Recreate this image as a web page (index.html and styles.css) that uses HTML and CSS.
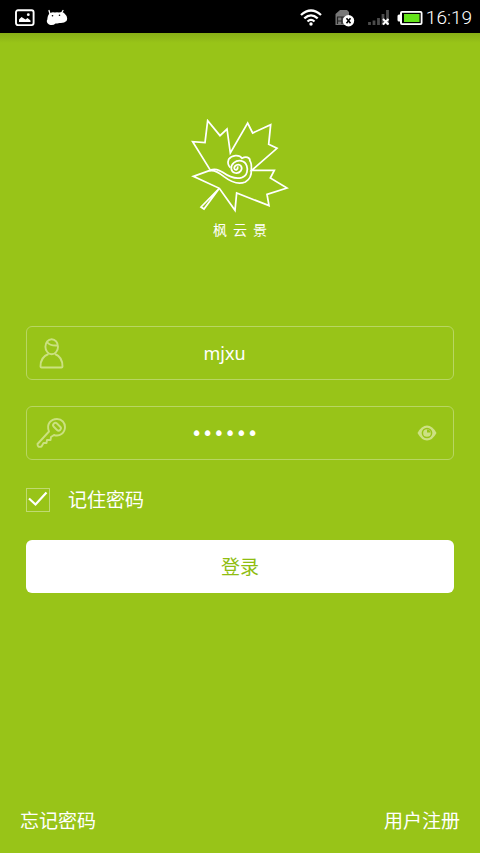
FILE: index.html
```html
<!DOCTYPE html>
<html lang="zh-CN">
<head>
<meta charset="utf-8">
<meta name="viewport" content="width=device-width, initial-scale=1">
<title>枫云景</title>
<link rel="stylesheet" href="styles.css">
</head>
<body>
<header class="status-bar">
  <div class="status-group notices">
    <svg width="20" height="18" viewBox="0 0 20 18" aria-hidden="true">
      <rect x="1" y="1.300" width="17.600" height="14.800" rx="2" fill="none" stroke="#fff" stroke-width="1.900"/>
      <path d="M4 13V10.500L6.500 8L10.500 10.500L12.500 9L15.500 11.500V13Z" fill="#fff"/>
      <circle cx="13.300" cy="5.700" r="1.400" fill="#fff"/>
    </svg>
    <svg width="22" height="18" viewBox="0 0 22 18" aria-hidden="true">
      <path d="M4 5L3 1.500M15.500 4L17 1.500" stroke="#fff" stroke-width="1.300" stroke-linecap="round"/>
      <path d="M3 5Q5 2.500 9 3.500Q11 3 13 3.500Q17 2 18.500 4.500Q22.500 8 20.500 12Q18 14.500 13.500 14Q11 14.500 9.500 14.500Q7 17 3 15.500Q-0.500 13.500 1.500 10Q1 8 3 5Z" fill="#fff"/>
      <circle cx="6.500" cy="6.800" r="0.800"/><circle cx="13.500" cy="6.300" r="0.800"/>
    </svg>
  </div>
  <div class="status-group system">
    <svg class="wifi" width="22" height="17" viewBox="0 0 22 17" aria-hidden="true">
      <g fill="none" stroke="#fff" stroke-width="2.300">
        <path d="M1 6Q11 -3 21 6M4.300 9.400Q11 3.300 17.700 9.400M7.500 12.500Q11 9.300 14.500 12.500"/>
      </g>
      <circle cx="11" cy="15" r="1.700" fill="#fff"/>
    </svg>
    <svg class="sim" width="20" height="18" viewBox="0 0 20 18" aria-hidden="true">
      <path d="M5 1H12L14 3V16H0.500V5Z" fill="#777"/>
      <path d="M2 8H12M3 12H12M2.500 8V15M7 8V15" stroke="#222" stroke-width="1.200"/>
      <circle cx="13.500" cy="11.700" r="5.700" fill="#fff"/>
      <path d="M11.500 9.200L15.500 14.200M15.500 9.200L11.500 14.200" stroke="#000" stroke-width="1.600"/>
    </svg>
    <svg class="signal" width="22" height="17" viewBox="0 0 22 17" aria-hidden="true">
      <path d="M1.500 13V16M6 11.500V16M10.500 9V16M15 5V16M19.500 1V16" stroke="#4c4c4c" stroke-width="2.800"/>
      <path d="M15 10L20.500 15.500M20.500 10L15 15.500" stroke="#fff" stroke-width="2"/>
    </svg>
    <svg class="battery" width="26" height="14" viewBox="0 0 26 14" aria-hidden="true">
      <path d="M5 0H23.500Q25.500 0 25.500 2V12Q25.500 14 23.500 14H5Q3 14 3 12V10.500H2Q0.500 10.500 0.500 9V5Q0.500 3.500 2 3.500H3V2Q3 0 5 0Z" fill="#fff"/>
      <rect x="5" y="1.800" width="18.700" height="10.400" fill="#000"/>
      <rect x="7" y="3" width="15.500" height="8" fill="#65e51b"/>
    </svg>
    <time class="clock">16:19</time>
  </div>
</header>
<main class="screen">
  <div class="brand">
    <svg class="leaf" width="98" height="94" viewBox="34 28 294 282" aria-hidden="true">
      <g fill="none" stroke="#fff" stroke-width="5.200" stroke-linejoin="miter">
        <path d="M91 180L39 96L76 99L84 33L121 78L142 58L152 130L204 40L219 70L273 45L267 104L292 116L216 182H284L272 205L322 235L262 254L268 288L171 250L166 302L119 236L41 200L91 182"/>
        <path d="M119 236L64 292L73 298L119 236"/>
        <path d="M89 184C105 180 118 189 133 201C154 217 178 225 197 217C211 209 216 194 215 179C216 165 214 158 211 154C211 143 199 139 187 146C179 134 156 136 147 149C144 157 146 168 152 174"/>
        <path d="M91 181C107 176 116 180 129 188C149 202 169 209 186 204C204 198 205 179 201 168C196 151 175 149 163 159C150 170 153 188 167 190C182 192 190 178 184 169C177 160 162 167 164 177C167 184 176 180 174 170"/>
      </g>
    </svg>
    <h1 class="brand-name"><span>枫</span><span>云</span><span>景</span></h1>
  </div>
  <form class="login">
    <div class="field">
      <svg class="field-icon" width="30" height="32" viewBox="0 0 30 32" aria-hidden="true">
        <g fill="none" stroke="#cbe180" stroke-width="1.900" stroke-linejoin="round">
          <ellipse cx="15.700" cy="9.700" rx="6.300" ry="7.500"/>
          <path d="M11 5Q14 9 21.500 8.500M12.500 17Q4.500 20 4.500 29.500Q4.500 30.500 5.500 30.500H25.500Q26.500 30.500 26.500 29.500Q26.500 20 19 17"/>
        </g>
      </svg>
      <input class="entry" type="text" value="mjxu" aria-label="用户名">
    </div>
    <div class="field">
      <svg class="field-icon" width="30" height="32" viewBox="0 0 30 32" aria-hidden="true">
        <g fill="none" stroke="#cbe180" stroke-width="1.900" stroke-linejoin="round">
          <path d="M13 14.500C10 7 15 2 21 2C26 2 29 6 29 10C29 16 23.500 20 18 18L15 20L14.500 23L11 23L10.500 26L7.500 26L5.500 29.500Q1.500 31 1.500 27Z"/>
          <rect x="16.500" y="7.500" width="9" height="4.500" rx="2.200" transform="rotate(45 21 9.750)"/>
        </g>
      </svg>
      <input class="entry secret" type="password" value="123456" aria-label="密码">
      <button class="reveal" type="button" aria-label="显示密码">
        <svg width="20" height="16" viewBox="0 0 20 16" aria-hidden="true">
          <path d="M0.500 8Q4.500 0.500 10 0.500Q15.500 0.500 19.500 8Q15.500 15.500 10 15.500Q4.500 15.500 0.500 8Z" fill="#cde184"/>
          <circle cx="10" cy="8" r="4.600" fill="#cde184" stroke="#98c418" stroke-width="1.500"/>
          <path d="M10 4.500V7.500H13.500A3.500 3.500 0 0 0 10 4.500Z" fill="#98c418"/>
        </svg>
      </button>
    </div>
    <label class="remember">
      <span class="tick">
        <input class="tick-box" type="checkbox" checked>
        <svg class="tick-mark" width="24" height="24" viewBox="0 0 24 24" aria-hidden="true"><path d="M3 10.500L9.500 16.500L20.500 4.500" fill="none" stroke="#fff" stroke-width="2.200"/></svg>
      </span>
      <span>记住密码</span>
    </label>
    <button class="submit" type="submit">登录</button>
  </form>
  <nav class="links">
    <a href="#forgot">忘记密码</a>
    <a href="#register">用户注册</a>
  </nav>
</main>
</body>
</html>
```
FILE: styles.css
```css
* {
  box-sizing: border-box;
}

body {
  display: flex;
  flex-direction: column;
  min-height: 100vh;
  margin: 0;
  background: #98c418;
  color: #fff;
  font-family: "Noto Sans", "Noto Sans CJK SC", sans-serif;
  font-size: 19px;
  line-height: 24px;
}

svg {
  display: block;
  flex: none;
}

.status-bar {
  display: flex;
  justify-content: space-between;
  align-items: center;
  height: 33px;
  padding: 2px 8px 0 15px;
  background: #000;
}

.status-group {
  display: flex;
  align-items: center;
}

.notices {
  gap: 11px;
}

.wifi {
  margin-right: 13px;
}

.sim {
  margin-right: 13px;
}

.signal {
  margin-right: 7px;
}

.battery {
  margin-right: 3px;
}

.clock {
  font-family: Roboto, sans-serif;
  font-weight: 300;
}

.screen {
  display: flex;
  flex: 1;
  flex-direction: column;
  padding: 86px 20px 20px;
  background: linear-gradient(#88af16, #98c418 10px);
}

.brand {
  display: flex;
  flex-direction: column;
  align-items: center;
  margin-bottom: 84px;
}

.brand-name {
  display: flex;
  gap: 6px;
  margin: 5px 0 0;
  font-size: 14px;
  font-weight: 400;
}

.login {
  display: flex;
  flex-direction: column;
  margin: 0 6px;
}

.field {
  display: flex;
  align-items: center;
  height: 54px;
  margin-bottom: 26px;
  padding: 0 16px 0 9px;
  border: 1px solid #b8d662;
  border-radius: 6px;
}

.entry {
  flex: 1;
  min-width: 0;
  margin: 0 50px 0 16px;
  padding: 0;
  border: 0;
  outline: 0;
  background: transparent;
  color: #fff;
  font: inherit;
  font-size: 18px;
  text-align: center;
}

.field:first-child .entry {
  margin-right: 70px;
}

.secret {
  font-family: "DejaVu Sans", sans-serif;
  font-size: 19px;
}

.reveal {
  padding: 0;
  border: 0;
  background: none;
}

.remember {
  display: flex;
  align-items: center;
  align-self: flex-start;
  gap: 18px;
  margin: 2px 0 28px;
}

.tick {
  display: grid;
}

.tick-box,
.tick-mark {
  grid-area: 1 / 1;
}

.tick-box {
  width: 24px;
  height: 24px;
  margin: 0;
  border: 1px solid #c0da72;
  appearance: none;
}

.tick-mark {
  visibility: hidden;
  pointer-events: none;
}

.tick-box:checked + .tick-mark {
  visibility: visible;
}

.submit {
  height: 53px;
  padding: 0;
  border: 0;
  border-radius: 6px;
  background: #fff;
  color: #8fbd10;
  font: inherit;
}

.links {
  display: flex;
  justify-content: space-between;
  margin-top: auto;
}

.links a {
  color: inherit;
  text-decoration: none;
}
```
